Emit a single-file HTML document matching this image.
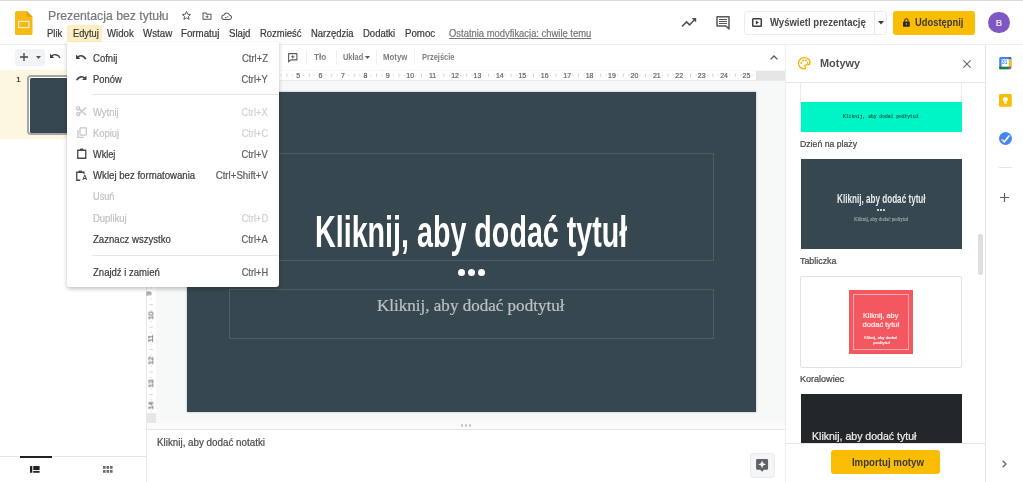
<!DOCTYPE html>
<html lang="pl">
<head>
<meta charset="utf-8">
<title>Prezentacja bez tytułu</title>
<style>
*{box-sizing:border-box;margin:0;padding:0}
html,body{width:1023px;height:482px;overflow:hidden;background:#fff}
body{font-family:"Liberation Sans",sans-serif;color:#333;position:relative;font-size:10px}
.a{position:absolute}
.t{position:absolute;white-space:nowrap}
svg{position:absolute;overflow:visible}
.t,svg{filter:blur(.35px)}
.t{-webkit-text-stroke:.22px}
</style>
</head>
<body>
<div class="a" style="left:0.00px;top:0.00px;width:1023.00px;height:1.00px;background:#dadada;"></div>
<svg style="left:15px;top:10.5px" width="17.5" height="24" viewBox="0 0 17.5 24">
  <path d="M1.6 0 H11.8 L17.5 5.7 V22.4 Q17.5 24 15.9 24 H1.6 Q0 24 0 22.4 V1.6 Q0 0 1.6 0Z" fill="#f5ba15"/>
  <path d="M11.8 0 L17.5 5.7 H13.2 Q11.8 5.7 11.8 4.3Z" fill="#e2a50a"/>
  <rect x="3.6" y="10.4" width="10.3" height="6.2" fill="none" stroke="#fdf0c8" stroke-width="1.2"/>
</svg>
<div class="t" style="font-family:'Liberation Sans',sans-serif;font-size:12.60px;line-height:12.60px;color:#767a7f;top:10.14px;left:47.60px;transform-origin:0 50%;transform:scaleX(0.9740);">Prezentacja bez tytułu</div>
<svg style="left:181px;top:10.300px" width="11" height="11" viewBox="0 0 24 24"><path d="M12 3.2l2.600 6 6.500.6-4.900 4.300 1.500 6.400L12 17.100 6.300 20.500l1.500-6.400L2.900 9.800l6.500-.6z" fill="none" stroke="#54585c" stroke-width="2.100" stroke-linejoin="round"/></svg>
<svg style="left:201.800px;top:12.200px" width="10" height="8" viewBox="0 0 26 22"><path d="M2 3h8l2.500 3H24v14H2z" fill="none" stroke="#54585c" stroke-width="2.800" stroke-linejoin="round"/><path d="M9 13h7m-3-3.200l3.200 3.200-3.200 3.200" fill="none" stroke="#54585c" stroke-width="2.600"/></svg>
<svg style="left:221.300px;top:12.200px" width="11.500" height="8.200" viewBox="0 0 30 22"><path d="M8 20a6 6 0 0 1-.6-12A8 8 0 0 1 22.600 8.500 5.800 5.800 0 0 1 23 20z" fill="none" stroke="#54585c" stroke-width="2.800" stroke-linejoin="round"/><path d="M10.500 13.500l3 3 5.500-5.500" fill="none" stroke="#54585c" stroke-width="2.600"/></svg>
<div class="a" style="left:67.40px;top:25.00px;width:34.80px;height:16.50px;background:#feefc3;border-radius:2px 2px 0 0;"></div>
<div class="t" style="font-family:'Liberation Sans',sans-serif;font-size:10.20px;line-height:10.20px;color:#383b3e;top:28.82px;left:47.10px;transform-origin:0 50%;transform:scaleX(0.9317);">Plik</div>
<div class="t" style="font-family:'Liberation Sans',sans-serif;font-size:10.20px;line-height:10.20px;color:#383b3e;top:28.82px;left:72.50px;transform-origin:0 50%;transform:scaleX(0.9072);">Edytuj</div>
<div class="t" style="font-family:'Liberation Sans',sans-serif;font-size:10.20px;line-height:10.20px;color:#383b3e;top:28.82px;left:107.30px;transform-origin:0 50%;transform:scaleX(0.9430);">Widok</div>
<div class="t" style="font-family:'Liberation Sans',sans-serif;font-size:10.20px;line-height:10.20px;color:#383b3e;top:28.82px;left:142.90px;transform-origin:0 50%;transform:scaleX(0.9554);">Wstaw</div>
<div class="t" style="font-family:'Liberation Sans',sans-serif;font-size:10.20px;line-height:10.20px;color:#383b3e;top:28.82px;left:181.30px;transform-origin:0 50%;transform:scaleX(0.9551);">Formatuj</div>
<div class="t" style="font-family:'Liberation Sans',sans-serif;font-size:10.20px;line-height:10.20px;color:#383b3e;top:28.82px;left:228.80px;transform-origin:0 50%;transform:scaleX(0.9446);">Slajd</div>
<div class="t" style="font-family:'Liberation Sans',sans-serif;font-size:10.20px;line-height:10.20px;color:#383b3e;top:28.82px;left:259.50px;transform-origin:0 50%;transform:scaleX(0.9277);">Rozmieść</div>
<div class="t" style="font-family:'Liberation Sans',sans-serif;font-size:10.20px;line-height:10.20px;color:#383b3e;top:28.82px;left:310.60px;transform-origin:0 50%;transform:scaleX(0.9264);">Narzędzia</div>
<div class="t" style="font-family:'Liberation Sans',sans-serif;font-size:10.20px;line-height:10.20px;color:#383b3e;top:28.82px;left:362.90px;transform-origin:0 50%;transform:scaleX(0.9321);">Dodatki</div>
<div class="t" style="font-family:'Liberation Sans',sans-serif;font-size:10.20px;line-height:10.20px;color:#383b3e;top:28.82px;left:404.90px;transform-origin:0 50%;transform:scaleX(0.9490);">Pomoc</div>
<div class="t" style="font-family:'Liberation Sans',sans-serif;font-size:10.20px;line-height:10.20px;color:#74787c;top:28.82px;left:448.70px;transform-origin:0 50%;transform:scaleX(0.9239);text-decoration:underline;">Ostatnia modyfikacja: chwilę temu</div>
<svg style="left:681px;top:17px" width="16" height="11" viewBox="0 0 16 11"><path d="M1 9.500l4.600-4.600 3 3 4.600-4.800" fill="none" stroke="#4a4e52" stroke-width="1.500"/><path d="M10.600 1h4.600v4.600z" fill="#4a4e52"/></svg>
<svg style="left:716px;top:15.500px" width="14" height="14" viewBox="0 0 14 14"><path d="M1 .8h12v12.200L10 10H1z" fill="none" stroke="#54585c" stroke-width="1.500" stroke-linejoin="round"/><path d="M3 3.500h8M3 5.500h8M3 7.500h8" stroke="#54585c" stroke-width="1"/></svg>
<div class="a" style="left:743.50px;top:10.50px;width:143.00px;height:24.00px;background:#fff;border:1px solid #ebecee;border-radius:3px;"></div>
<div class="a" style="left:874.00px;top:11.00px;width:1.00px;height:23.00px;background:#e8e9eb;"></div>
<svg style="left:751.500px;top:18px" width="10" height="9" viewBox="0 0 10 9"><rect x=".7" y=".7" width="8.600" height="7.600" rx=".8" fill="none" stroke="#3a3d41" stroke-width="1.500"/><path d="M3.900 2.600l3 1.900-3 1.900z" fill="#33363a"/></svg>
<div class="t" style="font-family:'Liberation Sans',sans-serif;font-size:10.20px;line-height:10.20px;color:#44474b;top:18.02px;font-weight:bold;-webkit-text-stroke:0;left:770.00px;transform-origin:0 50%;transform:scaleX(0.9365);">Wyświetl prezentację</div>
<svg style="left:877.500px;top:21px" width="6" height="3.500" viewBox="0 0 6 3.500"><path d="M0 0h6L3 3.500z" fill="#3a3d41"/></svg>
<div class="a" style="left:893.00px;top:10.50px;width:82.00px;height:24.00px;background:#fbbc04;border-radius:3px;"></div>
<svg style="left:902.900px;top:17.600px" width="6.800" height="8.800" viewBox="0 0 8 10"><rect x="0" y="4" width="8" height="6" rx=".8" fill="#2a2a2a"/><path d="M2 4.200V2.800a2 2 0 0 1 4 0v1.400" fill="none" stroke="#2a2a2a" stroke-width="1.200"/><circle cx="4" cy="7" r=".9" fill="#fbbc04"/></svg>
<div class="t" style="font-family:'Liberation Sans',sans-serif;font-size:10.20px;line-height:10.20px;color:#3c3a34;top:18.02px;font-weight:bold;-webkit-text-stroke:0;left:914.90px;transform-origin:0 50%;transform:scaleX(0.9194);">Udostępnij</div>
<div class="a" style="left:988.20px;top:11.50px;width:21.50px;height:21.50px;background:#7e57c2;border-radius:50%;"></div>
<div class="t" style="font-family:'Liberation Sans',sans-serif;font-size:9.60px;line-height:9.60px;color:#f1ecfa;top:17.71px;left:995.80px;">B</div>
<div class="a" style="left:0.00px;top:44.00px;width:785.50px;height:1.00px;background:#f0f0f0;"></div>
<div class="a" style="left:15.00px;top:49.00px;width:29.50px;height:16.50px;background:#f1f3f4;border-radius:2px;"></div>
<svg style="left:19.700px;top:53.400px" width="8" height="8" viewBox="0 0 8 8"><path d="M4 0v8M0 4h8" stroke="#43464a" stroke-width="1.300"/></svg>
<svg style="left:36.200px;top:56.200px" width="5" height="3" viewBox="0 0 5 3"><path d="M0 0h5L2.500 3z" fill="#54585c"/></svg>
<svg style="left:49.800px;top:53.400px" width="11" height="7" viewBox="0 0 22 14"><path d="M2 7.500 C7 1.500 16 2 20 10" fill="none" stroke="#3c4043" stroke-width="2.600"/><path d="M0 1.500v8.500h8.500z" fill="#3c4043"/></svg>
<svg style="left:287.800px;top:52.800px" width="9.500" height="9.500" viewBox="0 0 11 11"><path d="M.7.700h9.600v7.300H3.200L.7 10.300z" fill="none" stroke="#5a5e62" stroke-width="1.300" stroke-linejoin="round"/><path d="M5.500 2.500v3.800M3.600 4.400h3.800" stroke="#5a5e62" stroke-width="1.200"/></svg>
<div class="a" style="left:305.50px;top:49.50px;width:1.00px;height:15.00px;background:#f0f0f0;"></div>
<div class="a" style="left:335.50px;top:49.50px;width:1.00px;height:15.00px;background:#f0f0f0;"></div>
<div class="a" style="left:376.20px;top:49.50px;width:1.00px;height:15.00px;background:#f0f0f0;"></div>
<div class="a" style="left:414.30px;top:49.50px;width:1.00px;height:15.00px;background:#f0f0f0;"></div>
<div class="t" style="font-family:'Liberation Sans',sans-serif;font-size:8.80px;line-height:8.80px;color:#7b7f84;top:52.90px;font-weight:bold;-webkit-text-stroke:0;left:313.80px;transform-origin:0 50%;transform:scaleX(0.9240);">Tło</div>
<div class="t" style="font-family:'Liberation Sans',sans-serif;font-size:8.80px;line-height:8.80px;color:#7b7f84;top:52.90px;font-weight:bold;-webkit-text-stroke:0;left:343.00px;transform-origin:0 50%;transform:scaleX(0.8428);">Układ</div>
<svg style="left:364.800px;top:56.200px" width="5" height="3" viewBox="0 0 5 3"><path d="M0 0h5L2.500 3z" fill="#54585c"/></svg>
<div class="t" style="font-family:'Liberation Sans',sans-serif;font-size:8.80px;line-height:8.80px;color:#7b7f84;top:52.90px;font-weight:bold;-webkit-text-stroke:0;left:383.00px;transform-origin:0 50%;transform:scaleX(0.8913);">Motyw</div>
<div class="t" style="font-family:'Liberation Sans',sans-serif;font-size:8.80px;line-height:8.80px;color:#7b7f84;top:52.90px;font-weight:bold;-webkit-text-stroke:0;left:421.50px;transform-origin:0 50%;transform:scaleX(0.8518);">Przejście</div>
<svg style="left:769.500px;top:55px" width="8" height="5" viewBox="0 0 8 5"><path d="M.6 4.400L4 1l3.400 3.400" fill="none" stroke="#54585c" stroke-width="1.300"/></svg>
<div class="a" style="left:0.00px;top:70.00px;width:145.50px;height:68.50px;background:#fef7e0;"></div>
<div class="a" style="left:145.50px;top:70.00px;width:1.00px;height:412.00px;background:#e9e9e9;"></div>
<div class="t" style="font-family:'Liberation Sans',sans-serif;font-size:8.00px;line-height:8.00px;color:#2a2c2e;top:76.29px;left:16.20px;">1</div>
<div class="a" style="left:27.00px;top:74.70px;width:113.50px;height:60.70px;background:#fff;border:2px solid #a4a7aa;border-radius:4px;"></div>
<div class="a" style="left:30.00px;top:77.70px;width:107.50px;height:55.00px;background:#37474f;border-radius:1.500px;"></div>
<div class="a" style="left:0.00px;top:455.50px;width:145.50px;height:1.00px;background:#e6e6e6;"></div>
<div class="a" style="left:19.80px;top:456.30px;width:32.00px;height:1.40px;background:#202124;"></div>
<svg style="left:29.800px;top:465.800px" width="9.600" height="6.800" viewBox="0 0 10 7"><rect x="0" y="0" width="2.400" height="7" fill="#202124"/><rect x="3.400" y="0" width="6.600" height="4.200" fill="#202124"/><rect x="3.400" y="5.200" width="6.600" height="1.800" fill="#202124"/></svg>
<svg style="left:102.600px;top:465.800px" width="9.600" height="6.800" viewBox="0 0 9.600 6.800"><g fill="#6a6e72"><rect x="0" y="0" width="2.600" height="2.800"/><rect x="3.500" y="0" width="2.600" height="2.800"/><rect x="7" y="0" width="2.600" height="2.800"/><rect x="0" y="4" width="2.600" height="2.800"/><rect x="3.500" y="4" width="2.600" height="2.800"/><rect x="7" y="4" width="2.600" height="2.800"/></g></svg>
<div class="a" style="left:146.50px;top:70.00px;width:639.00px;height:353.00px;background:#f7f8f8;"></div>
<div class="a" style="left:146.50px;top:70.50px;width:639.00px;height:9.30px;background:#e6e6e6;"></div>
<div class="a" style="left:187.00px;top:70.50px;width:568.50px;height:9.30px;background:#fff;"></div>
<div class="t" style="font-family:'Liberation Sans',sans-serif;font-size:7.00px;line-height:7.00px;color:#63676b;top:71.78px;left:206.47px;">1</div>
<div class="t" style="font-family:'Liberation Sans',sans-serif;font-size:7.00px;line-height:7.00px;color:#63676b;top:71.78px;left:228.89px;">2</div>
<div class="t" style="font-family:'Liberation Sans',sans-serif;font-size:7.00px;line-height:7.00px;color:#63676b;top:71.78px;left:251.31px;">3</div>
<div class="t" style="font-family:'Liberation Sans',sans-serif;font-size:7.00px;line-height:7.00px;color:#63676b;top:71.78px;left:273.73px;">4</div>
<div class="t" style="font-family:'Liberation Sans',sans-serif;font-size:7.00px;line-height:7.00px;color:#63676b;top:71.78px;left:296.15px;">5</div>
<div class="t" style="font-family:'Liberation Sans',sans-serif;font-size:7.00px;line-height:7.00px;color:#63676b;top:71.78px;left:318.57px;">6</div>
<div class="t" style="font-family:'Liberation Sans',sans-serif;font-size:7.00px;line-height:7.00px;color:#63676b;top:71.78px;left:340.99px;">7</div>
<div class="t" style="font-family:'Liberation Sans',sans-serif;font-size:7.00px;line-height:7.00px;color:#63676b;top:71.78px;left:363.41px;">8</div>
<div class="t" style="font-family:'Liberation Sans',sans-serif;font-size:7.00px;line-height:7.00px;color:#63676b;top:71.78px;left:385.83px;">9</div>
<div class="t" style="font-family:'Liberation Sans',sans-serif;font-size:7.00px;line-height:7.00px;color:#63676b;top:71.78px;left:406.30px;">10</div>
<div class="t" style="font-family:'Liberation Sans',sans-serif;font-size:7.00px;line-height:7.00px;color:#63676b;top:71.78px;left:428.98px;">11</div>
<div class="t" style="font-family:'Liberation Sans',sans-serif;font-size:7.00px;line-height:7.00px;color:#63676b;top:71.78px;left:451.14px;">12</div>
<div class="t" style="font-family:'Liberation Sans',sans-serif;font-size:7.00px;line-height:7.00px;color:#63676b;top:71.78px;left:473.56px;">13</div>
<div class="t" style="font-family:'Liberation Sans',sans-serif;font-size:7.00px;line-height:7.00px;color:#63676b;top:71.78px;left:495.98px;">14</div>
<div class="t" style="font-family:'Liberation Sans',sans-serif;font-size:7.00px;line-height:7.00px;color:#63676b;top:71.78px;left:518.40px;">15</div>
<div class="t" style="font-family:'Liberation Sans',sans-serif;font-size:7.00px;line-height:7.00px;color:#63676b;top:71.78px;left:540.82px;">16</div>
<div class="t" style="font-family:'Liberation Sans',sans-serif;font-size:7.00px;line-height:7.00px;color:#63676b;top:71.78px;left:563.24px;">17</div>
<div class="t" style="font-family:'Liberation Sans',sans-serif;font-size:7.00px;line-height:7.00px;color:#63676b;top:71.78px;left:585.66px;">18</div>
<div class="t" style="font-family:'Liberation Sans',sans-serif;font-size:7.00px;line-height:7.00px;color:#63676b;top:71.78px;left:608.08px;">19</div>
<div class="t" style="font-family:'Liberation Sans',sans-serif;font-size:7.00px;line-height:7.00px;color:#63676b;top:71.78px;left:630.50px;">20</div>
<div class="t" style="font-family:'Liberation Sans',sans-serif;font-size:7.00px;line-height:7.00px;color:#63676b;top:71.78px;left:652.92px;">21</div>
<div class="t" style="font-family:'Liberation Sans',sans-serif;font-size:7.00px;line-height:7.00px;color:#63676b;top:71.78px;left:675.34px;">22</div>
<div class="t" style="font-family:'Liberation Sans',sans-serif;font-size:7.00px;line-height:7.00px;color:#63676b;top:71.78px;left:697.76px;">23</div>
<div class="t" style="font-family:'Liberation Sans',sans-serif;font-size:7.00px;line-height:7.00px;color:#63676b;top:71.78px;left:720.18px;">24</div>
<div class="t" style="font-family:'Liberation Sans',sans-serif;font-size:7.00px;line-height:7.00px;color:#63676b;top:71.78px;left:742.60px;">25</div>

<svg style="left:0;top:0" width="1023" height="482" viewBox="0 0 1023 482"><g fill="#c6c9cb"><rect x="191.20" y="74.60" width="0.8" height="1.2"/><rect x="196.81" y="73.60" width="0.8" height="3.2"/><rect x="202.41" y="74.60" width="0.8" height="1.2"/><rect x="213.62" y="74.60" width="0.8" height="1.2"/><rect x="219.23" y="73.60" width="0.8" height="3.2"/><rect x="224.84" y="74.60" width="0.8" height="1.2"/><rect x="236.04" y="74.60" width="0.8" height="1.2"/><rect x="241.65" y="73.60" width="0.8" height="3.2"/><rect x="247.25" y="74.60" width="0.8" height="1.2"/><rect x="258.47" y="74.60" width="0.8" height="1.2"/><rect x="264.07" y="73.60" width="0.8" height="3.2"/><rect x="269.68" y="74.60" width="0.8" height="1.2"/><rect x="280.89" y="74.60" width="0.8" height="1.2"/><rect x="286.49" y="73.60" width="0.8" height="3.2"/><rect x="292.10" y="74.60" width="0.8" height="1.2"/><rect x="303.31" y="74.60" width="0.8" height="1.2"/><rect x="308.91" y="73.60" width="0.8" height="3.2"/><rect x="314.52" y="74.60" width="0.8" height="1.2"/><rect x="325.73" y="74.60" width="0.8" height="1.2"/><rect x="331.33" y="73.60" width="0.8" height="3.2"/><rect x="336.94" y="74.60" width="0.8" height="1.2"/><rect x="348.15" y="74.60" width="0.8" height="1.2"/><rect x="353.75" y="73.60" width="0.8" height="3.2"/><rect x="359.36" y="74.60" width="0.8" height="1.2"/><rect x="370.57" y="74.60" width="0.8" height="1.2"/><rect x="376.17" y="73.60" width="0.8" height="3.2"/><rect x="381.78" y="74.60" width="0.8" height="1.2"/><rect x="392.99" y="74.60" width="0.8" height="1.2"/><rect x="398.59" y="73.60" width="0.8" height="3.2"/><rect x="404.20" y="74.60" width="0.8" height="1.2"/><rect x="415.41" y="74.60" width="0.8" height="1.2"/><rect x="421.01" y="73.60" width="0.8" height="3.2"/><rect x="426.62" y="74.60" width="0.8" height="1.2"/><rect x="437.83" y="74.60" width="0.8" height="1.2"/><rect x="443.43" y="73.60" width="0.8" height="3.2"/><rect x="449.04" y="74.60" width="0.8" height="1.2"/><rect x="460.25" y="74.60" width="0.8" height="1.2"/><rect x="465.85" y="73.60" width="0.8" height="3.2"/><rect x="471.46" y="74.60" width="0.8" height="1.2"/><rect x="482.67" y="74.60" width="0.8" height="1.2"/><rect x="488.27" y="73.60" width="0.8" height="3.2"/><rect x="493.88" y="74.60" width="0.8" height="1.2"/><rect x="505.09" y="74.60" width="0.8" height="1.2"/><rect x="510.69" y="73.60" width="0.8" height="3.2"/><rect x="516.30" y="74.60" width="0.8" height="1.2"/><rect x="527.50" y="74.60" width="0.8" height="1.2"/><rect x="533.11" y="73.60" width="0.8" height="3.2"/><rect x="538.72" y="74.60" width="0.8" height="1.2"/><rect x="549.93" y="74.60" width="0.8" height="1.2"/><rect x="555.53" y="73.60" width="0.8" height="3.2"/><rect x="561.14" y="74.60" width="0.8" height="1.2"/><rect x="572.35" y="74.60" width="0.8" height="1.2"/><rect x="577.95" y="73.60" width="0.8" height="3.2"/><rect x="583.56" y="74.60" width="0.8" height="1.2"/><rect x="594.77" y="74.60" width="0.8" height="1.2"/><rect x="600.37" y="73.60" width="0.8" height="3.2"/><rect x="605.98" y="74.60" width="0.8" height="1.2"/><rect x="617.19" y="74.60" width="0.8" height="1.2"/><rect x="622.79" y="73.60" width="0.8" height="3.2"/><rect x="628.40" y="74.60" width="0.8" height="1.2"/><rect x="639.61" y="74.60" width="0.8" height="1.2"/><rect x="645.21" y="73.60" width="0.8" height="3.2"/><rect x="650.82" y="74.60" width="0.8" height="1.2"/><rect x="662.03" y="74.60" width="0.8" height="1.2"/><rect x="667.63" y="73.60" width="0.8" height="3.2"/><rect x="673.24" y="74.60" width="0.8" height="1.2"/><rect x="684.45" y="74.60" width="0.8" height="1.2"/><rect x="690.05" y="73.60" width="0.8" height="3.2"/><rect x="695.66" y="74.60" width="0.8" height="1.2"/><rect x="706.87" y="74.60" width="0.8" height="1.2"/><rect x="712.47" y="73.60" width="0.8" height="3.2"/><rect x="718.08" y="74.60" width="0.8" height="1.2"/><rect x="729.29" y="74.60" width="0.8" height="1.2"/><rect x="734.89" y="73.60" width="0.8" height="3.2"/><rect x="740.50" y="74.60" width="0.8" height="1.2"/><rect x="751.71" y="74.60" width="0.8" height="1.2"/></g></svg>
<div class="a" style="left:146.50px;top:79.50px;width:639.00px;height:1.00px;background:#eaeaea;"></div>
<div class="a" style="left:146.50px;top:79.80px;width:9.30px;height:343.20px;background:#e6e6e6;"></div>
<div class="a" style="left:146.50px;top:92.00px;width:9.30px;height:321.00px;background:#fff;"></div>
<div class="t" style="font-family:'Liberation Sans',sans-serif;font-size:7.20px;line-height:7.20px;color:#63676b;top:110.60px;left:146.70px;transform:rotate(-90deg);">1</div>
<div class="t" style="font-family:'Liberation Sans',sans-serif;font-size:7.20px;line-height:7.20px;color:#63676b;top:133.02px;left:146.70px;transform:rotate(-90deg);">2</div>
<div class="t" style="font-family:'Liberation Sans',sans-serif;font-size:7.20px;line-height:7.20px;color:#63676b;top:155.44px;left:146.70px;transform:rotate(-90deg);">3</div>
<div class="t" style="font-family:'Liberation Sans',sans-serif;font-size:7.20px;line-height:7.20px;color:#63676b;top:177.86px;left:146.70px;transform:rotate(-90deg);">4</div>
<div class="t" style="font-family:'Liberation Sans',sans-serif;font-size:7.20px;line-height:7.20px;color:#63676b;top:200.28px;left:146.70px;transform:rotate(-90deg);">5</div>
<div class="t" style="font-family:'Liberation Sans',sans-serif;font-size:7.20px;line-height:7.20px;color:#63676b;top:222.70px;left:146.70px;transform:rotate(-90deg);">6</div>
<div class="t" style="font-family:'Liberation Sans',sans-serif;font-size:7.20px;line-height:7.20px;color:#63676b;top:245.12px;left:146.70px;transform:rotate(-90deg);">7</div>
<div class="t" style="font-family:'Liberation Sans',sans-serif;font-size:7.20px;line-height:7.20px;color:#63676b;top:267.54px;left:146.70px;transform:rotate(-90deg);">8</div>
<div class="t" style="font-family:'Liberation Sans',sans-serif;font-size:7.20px;line-height:7.20px;color:#63676b;top:289.96px;left:146.70px;transform:rotate(-90deg);">9</div>
<div class="t" style="font-family:'Liberation Sans',sans-serif;font-size:7.20px;line-height:7.20px;color:#63676b;top:312.38px;left:146.70px;transform:rotate(-90deg);">10</div>
<div class="t" style="font-family:'Liberation Sans',sans-serif;font-size:7.20px;line-height:7.20px;color:#63676b;top:334.80px;left:146.70px;transform:rotate(-90deg);">11</div>
<div class="t" style="font-family:'Liberation Sans',sans-serif;font-size:7.20px;line-height:7.20px;color:#63676b;top:357.22px;left:146.70px;transform:rotate(-90deg);">12</div>
<div class="t" style="font-family:'Liberation Sans',sans-serif;font-size:7.20px;line-height:7.20px;color:#63676b;top:379.64px;left:146.70px;transform:rotate(-90deg);">13</div>
<div class="t" style="font-family:'Liberation Sans',sans-serif;font-size:7.20px;line-height:7.20px;color:#63676b;top:402.06px;left:146.70px;transform:rotate(-90deg);">14</div>

<svg style="left:0;top:0" width="1023" height="482" viewBox="0 0 1023 482"><g fill="#c6c9cb"><rect x="150.60" y="96.91" width="1.2" height="0.8"/><rect x="149.60" y="102.51" width="3.2" height="0.8"/><rect x="150.60" y="108.11" width="1.2" height="0.8"/><rect x="150.60" y="119.33" width="1.2" height="0.8"/><rect x="149.60" y="124.93" width="3.2" height="0.8"/><rect x="150.60" y="130.53" width="1.2" height="0.8"/><rect x="150.60" y="141.75" width="1.2" height="0.8"/><rect x="149.60" y="147.35" width="3.2" height="0.8"/><rect x="150.60" y="152.96" width="1.2" height="0.8"/><rect x="150.60" y="164.16" width="1.2" height="0.8"/><rect x="149.60" y="169.77" width="3.2" height="0.8"/><rect x="150.60" y="175.38" width="1.2" height="0.8"/><rect x="150.60" y="186.58" width="1.2" height="0.8"/><rect x="149.60" y="192.19" width="3.2" height="0.8"/><rect x="150.60" y="197.79" width="1.2" height="0.8"/><rect x="150.60" y="209.00" width="1.2" height="0.8"/><rect x="149.60" y="214.61" width="3.2" height="0.8"/><rect x="150.60" y="220.22" width="1.2" height="0.8"/><rect x="150.60" y="231.43" width="1.2" height="0.8"/><rect x="149.60" y="237.03" width="3.2" height="0.8"/><rect x="150.60" y="242.64" width="1.2" height="0.8"/><rect x="150.60" y="253.84" width="1.2" height="0.8"/><rect x="149.60" y="259.45" width="3.2" height="0.8"/><rect x="150.60" y="265.06" width="1.2" height="0.8"/><rect x="150.60" y="276.27" width="1.2" height="0.8"/><rect x="149.60" y="281.87" width="3.2" height="0.8"/><rect x="150.60" y="287.48" width="1.2" height="0.8"/><rect x="150.60" y="298.69" width="1.2" height="0.8"/><rect x="149.60" y="304.29" width="3.2" height="0.8"/><rect x="150.60" y="309.90" width="1.2" height="0.8"/><rect x="150.60" y="321.11" width="1.2" height="0.8"/><rect x="149.60" y="326.71" width="3.2" height="0.8"/><rect x="150.60" y="332.32" width="1.2" height="0.8"/><rect x="150.60" y="343.53" width="1.2" height="0.8"/><rect x="149.60" y="349.13" width="3.2" height="0.8"/><rect x="150.60" y="354.74" width="1.2" height="0.8"/><rect x="150.60" y="365.95" width="1.2" height="0.8"/><rect x="149.60" y="371.55" width="3.2" height="0.8"/><rect x="150.60" y="377.16" width="1.2" height="0.8"/><rect x="150.60" y="388.37" width="1.2" height="0.8"/><rect x="149.60" y="393.97" width="3.2" height="0.8"/><rect x="150.60" y="399.58" width="1.2" height="0.8"/><rect x="150.60" y="410.79" width="1.2" height="0.8"/></g></svg>
<div class="a" style="left:187.00px;top:92.00px;width:568.50px;height:320.00px;background:#37474f;box-shadow:0 0 2px rgba(0,0,0,.3);"></div>
<div class="a" style="left:229.00px;top:153.30px;width:485.00px;height:107.70px;border:1px solid #4f5e64;"></div>
<div class="a" style="left:229.00px;top:288.80px;width:485.00px;height:50.00px;border:1px solid #4f5e64;"></div>
<div class="a" id="ttl" style="left:315px;top:205.500px;width:312.500px;height:50px;overflow:visible"><div class="a" style="left:0;top:0;white-space:nowrap;font-weight:bold;font-size:44.800px;line-height:50px;color:#fff;transform-origin:0 0;transform:scaleX(0.6401)">Kliknij, aby dodać tytuł</div></div>
<div class="a" style="left:457.50px;top:268.90px;width:7.00px;height:7.00px;background:#fff;border-radius:50%;"></div>
<div class="a" style="left:467.50px;top:268.90px;width:7.00px;height:7.00px;background:#fff;border-radius:50%;"></div>
<div class="a" style="left:477.50px;top:268.90px;width:7.00px;height:7.00px;background:#fff;border-radius:50%;"></div>
<div class="t" style="font-family:'Liberation Serif',serif;font-size:17.40px;line-height:17.40px;color:#bac1c4;top:296.69px;left:377.20px;transform-origin:0 50%;transform:scaleX(0.9797);">Kliknij, aby dodać podtytuł</div>
<div class="a" style="left:146.50px;top:422.80px;width:639.00px;height:6.20px;background:#fbfbfb;"></div>
<div class="a" style="left:146.50px;top:429.00px;width:639.00px;height:1.00px;background:#e4e4e4;"></div>
<div class="a" style="left:146.50px;top:430.00px;width:639.00px;height:52.00px;background:#fff;"></div>
<div class="a" style="left:460.50px;top:424.40px;width:2.20px;height:2.20px;background:#c3c6c9;border-radius:50%;"></div>
<div class="a" style="left:464.70px;top:424.40px;width:2.20px;height:2.20px;background:#c3c6c9;border-radius:50%;"></div>
<div class="a" style="left:468.90px;top:424.40px;width:2.20px;height:2.20px;background:#c3c6c9;border-radius:50%;"></div>
<div class="t" style="font-family:'Liberation Sans',sans-serif;font-size:10.20px;line-height:10.20px;color:#4a4d51;top:437.62px;left:156.80px;transform-origin:0 50%;transform:scaleX(0.9631);">Kliknij, aby dodać notatki</div>
<div class="a" style="left:749.50px;top:453.30px;width:25.80px;height:24.90px;background:#f4f5f5;border:1px solid #e9eaeb;border-radius:3px;"></div>
<svg style="left:756.200px;top:458.800px" width="12.200" height="13" viewBox="0 0 12 13"><path d="M1.200 0h9.600Q12 0 12 1.200v8.300q0 1.200-1.200 1.200H7.800L6 12.800 4.200 10.700H1.200Q0 10.700 0 9.500V1.200Q0 0 1.200 0z" fill="#5e6165"/><path d="M6 1.500l1.150 2.750 2.750 1.150-2.750 1.150L6 9.300 4.850 6.550 2.100 5.400l2.750-1.150z" fill="#f6f6f6"/></svg>
<div class="a" style="left:785.00px;top:44.00px;width:201.00px;height:438.00px;background:#fff;border-left:1px solid #efefef;"></div>
<div class="a" style="left:800.00px;top:82.00px;width:162.00px;height:50.00px;background:#fff;border:1px solid #ececec;border-top:none;"></div>
<div class="a" style="left:801.00px;top:102.30px;width:160.50px;height:29.30px;background:#00f5c6;"></div>
<div class="t" style="font-family:'Liberation Mono',monospace;font-size:4.60px;line-height:4.60px;color:#0a5a4e;top:114.89px;font-weight:bold;-webkit-text-stroke:0;left:843.30px;transform-origin:0 50%;transform:scaleX(1.0143);">Kliknij, aby dodać podtytuł</div>
<div class="t" style="font-family:'Liberation Sans',sans-serif;font-size:9.40px;line-height:9.40px;color:#44474a;top:138.71px;left:800.00px;transform-origin:0 50%;transform:scaleX(0.9268);">Dzień na plaży</div>
<div class="a" style="left:801.00px;top:158.80px;width:160.50px;height:90.40px;background:#37474f;"></div>
<div class="a" style="left:836.800px;top:190px;width:89px;height:18px"><div class="a" id="ttl2" style="left:0;top:0;white-space:nowrap;font-weight:bold;font-size:12.300px;line-height:18px;color:#e8ecee;transform-origin:0 0;transform:scaleX(0.6616)">Kliknij, aby dodać tytuł</div></div>
<div class="a" style="left:877.30px;top:209.00px;width:2.00px;height:2.00px;background:#fff;border-radius:50%;"></div>
<div class="a" style="left:880.00px;top:209.00px;width:2.00px;height:2.00px;background:#fff;border-radius:50%;"></div>
<div class="a" style="left:882.70px;top:209.00px;width:2.00px;height:2.00px;background:#fff;border-radius:50%;"></div>
<div class="t" style="font-family:'Liberation Serif',serif;font-size:5.20px;line-height:5.20px;color:#929ca1;top:216.87px;left:854.00px;transform-origin:0 50%;transform:scaleX(0.9463);">Kliknij, aby dodać podtytuł</div>
<div class="t" style="font-family:'Liberation Sans',sans-serif;font-size:9.40px;line-height:9.40px;color:#44474a;top:256.21px;left:800.00px;transform-origin:0 50%;transform:scaleX(0.9465);">Tabliczka</div>
<div class="a" style="left:978.30px;top:233.50px;width:5.00px;height:41.50px;background:#dcdee0;border-radius:2.500px;"></div>
<div class="a" style="left:800.00px;top:275.70px;width:162.00px;height:92.00px;background:#fff;border:1px solid #e2e3e5;border-radius:2px;"></div>
<div class="a" style="left:849.20px;top:290.00px;width:63.80px;height:63.60px;background:#f3575f;"></div>
<div class="a" style="left:852.70px;top:293.50px;width:56.80px;height:56.60px;border:1px solid rgba(255,255,255,.5);"></div>
<div class="t" style="font-family:'Liberation Sans',sans-serif;font-size:7.80px;line-height:7.80px;color:#fdeaeb;top:311.99px;left:862.46px;transform-origin:50% 50%;transform:scaleX(0.9522);">Kliknij, aby</div>
<div class="t" style="font-family:'Liberation Sans',sans-serif;font-size:7.80px;line-height:7.80px;color:#fdeaeb;top:320.79px;left:862.24px;transform-origin:50% 50%;transform:scaleX(0.9677);">dodać tytuł</div>
<div class="t" style="font-family:'Liberation Sans',sans-serif;font-size:4.30px;line-height:4.30px;color:#fde3e4;top:336.10px;left:864.37px;transform-origin:50% 50%;transform:scaleX(0.9865);">Kliknij, aby dodać</div>
<div class="t" style="font-family:'Liberation Sans',sans-serif;font-size:4.30px;line-height:4.30px;color:#fde3e4;top:341.10px;left:873.57px;transform-origin:50% 50%;transform:scaleX(1.0888);">podtytuł</div>
<div class="t" style="font-family:'Liberation Sans',sans-serif;font-size:9.40px;line-height:9.40px;color:#44474a;top:373.61px;left:800.00px;transform-origin:0 50%;transform:scaleX(0.9638);">Koralowiec</div>
<div class="a" style="left:801.00px;top:393.60px;width:160.50px;height:50.00px;background:#22282a;"></div>
<div class="t" style="font-family:'Liberation Sans',sans-serif;font-size:10.80px;line-height:10.80px;color:#eef0f1;top:431.02px;left:811.60px;transform-origin:0 50%;transform:scaleX(0.9773);">Kliknij, aby dodać tytuł</div>
<div class="a" style="left:786.00px;top:442.50px;width:200.00px;height:39.50px;background:#fff;border-top:1px solid #e6e6e6;"></div>
<div class="a" style="left:831.30px;top:450.00px;width:108.80px;height:23.60px;background:#fbbc04;border-radius:3px;"></div>
<div class="t" style="font-family:'Liberation Sans',sans-serif;font-size:10.20px;line-height:10.20px;color:#3a3a3a;top:457.82px;font-weight:bold;-webkit-text-stroke:0;left:849.68px;transform-origin:50% 50%;transform:scaleX(0.9493);">Importuj motyw</div>
<div class="a" style="left:786.00px;top:45.00px;width:200.00px;height:37.50px;background:#fff;border-bottom:1px solid #e6e6e6;"></div>
<svg style="left:797.200px;top:55.800px" width="14.500" height="14.500" viewBox="0 0 24 24"><path d="M12 2.500C6.700 2.500 2.500 6.700 2.500 12s4.200 9.500 9.500 9.500c1.300 0 2.100-1 2.100-2.100 0-.6-.2-1-.5-1.400-.3-.4-.5-.8-.5-1.300 0-1.200.9-2.100 2.100-2.100h2.300c2.200 0 4-1.800 4-4 0-4.500-4.200-8.100-9.500-8.100z" fill="none" stroke="#f9ab00" stroke-width="2.100"/><circle cx="7" cy="11.500" r="1.500" fill="#f9ab00"/><circle cx="10" cy="7.300" r="1.500" fill="#f9ab00"/><circle cx="14.500" cy="7.300" r="1.500" fill="#f9ab00"/><circle cx="17.500" cy="11.200" r="1.500" fill="#f9ab00"/></svg>
<div class="t" style="font-family:'Liberation Sans',sans-serif;font-size:11.80px;line-height:11.80px;color:#4c4f53;top:58.34px;font-weight:bold;-webkit-text-stroke:0;left:820.20px;transform-origin:0 50%;transform:scaleX(0.9245);">Motywy</div>
<svg style="left:963.200px;top:59.700px" width="8" height="8" viewBox="0 0 8 8"><path d="M.4.400l7.200 7.200M7.600.400L.4 7.600" stroke="#5f6368" stroke-width="1.100"/></svg>
<div class="a" style="left:985.00px;top:44.00px;width:38.00px;height:438.00px;background:#fff;border-left:1px solid #e6e6e6;"></div>
<svg style="left:998.600px;top:57px" width="12.600" height="12.200" viewBox="0 0 13 13"><rect x="0" y="0" width="13" height="13" rx="1.600" fill="#4285f4"/><rect x="10.300" y="2.200" width="2.700" height="8.100" fill="#fbbc04"/><rect x="0" y="10.300" width="10.300" height="2.700" fill="#188038"/><path d="M10.300 10.300h2.700l-2.700 2.700z" fill="#ea4335"/><path d="M10.300 0h1.100q1.600 0 1.600 1.600v.6h-2.700z" fill="#1967d2"/><rect x="2.600" y="2.400" width="7.700" height="7.900" fill="#fff"/></svg>
<div class="t" style="font-family:'Liberation Sans',sans-serif;font-size:4.80px;line-height:4.80px;color:#4285f4;top:61.26px;font-weight:bold;-webkit-text-stroke:0;left:1002.03px;">31</div>
<svg style="left:998.900px;top:94px" width="12.800" height="12.800" viewBox="0 0 12.800 12.800"><rect x="0" y="0" width="12.800" height="12.800" rx="1.500" fill="#fbbc04"/><circle cx="6.400" cy="5.400" r="2.500" fill="#fff"/><rect x="5.200" y="7.600" width="2.400" height="2.200" fill="#fff"/></svg>
<svg style="left:998.500px;top:131.500px" width="13" height="13" viewBox="0 0 13 13"><circle cx="6.500" cy="6.500" r="6.500" fill="#4285f4"/><path d="M3.200 7.800l2.200 2 4.600-5.800" fill="none" stroke="#fff" stroke-width="1.700" stroke-linecap="round"/><circle cx="3.600" cy="8" r="1" fill="#fbbc04"/></svg>
<div class="a" style="left:998.50px;top:167.00px;width:13.50px;height:1.00px;background:#e4e5e7;"></div>
<svg style="left:1000.400px;top:192.500px" width="9" height="9" viewBox="0 0 9 9"><path d="M4.500 0v9M0 4.500h9" stroke="#5f6368" stroke-width="1.200"/></svg>
<svg style="left:1002.300px;top:460.300px" width="5" height="8" viewBox="0 0 5 8"><path d="M.700.700L4 4 .7 7.300" fill="none" stroke="#5f6368" stroke-width="1.300"/></svg>
<div class="a" style="left:0.00px;top:44.00px;width:1023.00px;height:1.00px;background:#efefef;"></div>
<div class="a" style="left:67.40px;top:41.50px;width:211.80px;height:245.70px;background:#fff;border-radius:0 0 3px 3px;box-shadow:0 1.500px 4px rgba(0,0,0,.24);clip-path:inset(0 -8px -8px -8px);"></div>
<div class="t" style="font-family:'Liberation Sans',sans-serif;font-size:10.20px;line-height:10.20px;color:#3a3d40;top:53.62px;left:93.30px;transform-origin:0 50%;transform:scaleX(0.9368);">Cofnij</div>
<div class="t" style="font-family:'Liberation Sans',sans-serif;font-size:10.20px;line-height:10.20px;color:#5c5f63;top:53.62px;left:239.98px;transform-origin:100% 50%;transform:scaleX(0.9281);">Ctrl+Z</div>
<div class="t" style="font-family:'Liberation Sans',sans-serif;font-size:10.20px;line-height:10.20px;color:#3a3d40;top:74.62px;left:93.30px;transform-origin:0 50%;transform:scaleX(0.9212);">Ponów</div>
<div class="t" style="font-family:'Liberation Sans',sans-serif;font-size:10.20px;line-height:10.20px;color:#5c5f63;top:74.62px;left:239.41px;transform-origin:100% 50%;transform:scaleX(0.9093);">Ctrl+Y</div>
<div class="t" style="font-family:'Liberation Sans',sans-serif;font-size:10.20px;line-height:10.20px;color:#c0c2c4;top:107.52px;left:93.30px;transform-origin:0 50%;transform:scaleX(0.9293);">Wytnij</div>
<div class="t" style="font-family:'Liberation Sans',sans-serif;font-size:10.20px;line-height:10.20px;color:#cfd1d3;top:107.52px;left:239.41px;transform-origin:100% 50%;transform:scaleX(0.9093);">Ctrl+X</div>
<div class="t" style="font-family:'Liberation Sans',sans-serif;font-size:10.20px;line-height:10.20px;color:#c0c2c4;top:128.72px;left:93.30px;transform-origin:0 50%;transform:scaleX(0.9249);">Kopiuj</div>
<div class="t" style="font-family:'Liberation Sans',sans-serif;font-size:10.20px;line-height:10.20px;color:#cfd1d3;top:128.72px;left:238.84px;transform-origin:100% 50%;transform:scaleX(0.9089);">Ctrl+C</div>
<div class="t" style="font-family:'Liberation Sans',sans-serif;font-size:10.20px;line-height:10.20px;color:#3a3d40;top:149.82px;left:93.30px;transform-origin:0 50%;transform:scaleX(0.8994);">Wklej</div>
<div class="t" style="font-family:'Liberation Sans',sans-serif;font-size:10.20px;line-height:10.20px;color:#5c5f63;top:149.82px;left:239.41px;transform-origin:100% 50%;transform:scaleX(0.9093);">Ctrl+V</div>
<div class="t" style="font-family:'Liberation Sans',sans-serif;font-size:10.20px;line-height:10.20px;color:#3a3d40;top:171.22px;left:93.30px;transform-origin:0 50%;transform:scaleX(0.9449);">Wklej bez formatowania</div>
<div class="t" style="font-family:'Liberation Sans',sans-serif;font-size:10.20px;line-height:10.20px;color:#5c5f63;top:171.22px;left:213.06px;transform-origin:100% 50%;transform:scaleX(0.9520);">Ctrl+Shift+V</div>
<div class="t" style="font-family:'Liberation Sans',sans-serif;font-size:10.20px;line-height:10.20px;color:#c0c2c4;top:192.22px;left:93.30px;transform-origin:0 50%;transform:scaleX(0.9035);">Usuń</div>
<div class="t" style="font-family:'Liberation Sans',sans-serif;font-size:10.20px;line-height:10.20px;color:#c0c2c4;top:213.82px;left:93.30px;transform-origin:0 50%;transform:scaleX(0.9297);">Duplikuj</div>
<div class="t" style="font-family:'Liberation Sans',sans-serif;font-size:10.20px;line-height:10.20px;color:#cfd1d3;top:213.82px;left:238.84px;transform-origin:100% 50%;transform:scaleX(0.9089);">Ctrl+D</div>
<div class="t" style="font-family:'Liberation Sans',sans-serif;font-size:10.20px;line-height:10.20px;color:#3a3d40;top:235.42px;left:93.30px;transform-origin:0 50%;transform:scaleX(0.9425);">Zaznacz wszystko</div>
<div class="t" style="font-family:'Liberation Sans',sans-serif;font-size:10.20px;line-height:10.20px;color:#5c5f63;top:235.42px;left:239.41px;transform-origin:100% 50%;transform:scaleX(0.9093);">Ctrl+A</div>
<div class="t" style="font-family:'Liberation Sans',sans-serif;font-size:10.20px;line-height:10.20px;color:#3a3d40;top:267.52px;left:93.30px;transform-origin:0 50%;transform:scaleX(0.9363);">Znajdź i zamień</div>
<div class="t" style="font-family:'Liberation Sans',sans-serif;font-size:10.20px;line-height:10.20px;color:#5c5f63;top:267.52px;left:238.84px;transform-origin:100% 50%;transform:scaleX(0.9089);">Ctrl+H</div>
<div class="a" style="left:92.40px;top:94.00px;width:186.80px;height:1.00px;background:#e6e6e6;"></div>
<div class="a" style="left:92.40px;top:254.80px;width:186.80px;height:1.00px;background:#e6e6e6;"></div>
<svg style="left:76.200px;top:54.100px" width="10.500" height="7" viewBox="0 0 21 14"><path d="M2.500 7.500C7 1.800 15.500 2 19.500 10.500" fill="none" stroke="#45484c" stroke-width="3.200"/><path d="M0 1v9h9z" fill="#45484c"/></svg>
<svg style="left:76.200px;top:75.200px" width="10.500" height="7" viewBox="0 0 21 14"><path d="M18.500 7.500C14 1.800 5.500 2 1.500 10.500" fill="none" stroke="#45484c" stroke-width="3.200"/><path d="M21 1v9h-9z" fill="#45484c"/></svg>
<svg style="left:76.300px;top:106.200px" width="10.500" height="10.500" viewBox="0 0 21 21"><g fill="none" stroke="#c4c6c8" stroke-width="2.700"><circle cx="4.500" cy="4.800" r="3"/><circle cx="4.500" cy="16.200" r="3"/><path d="M7 6.500L20 18M7 14.500L20 3"/></g></svg>
<svg style="left:76.800px;top:127.200px" width="10" height="11" viewBox="0 0 20 22"><g fill="none" stroke="#c4c6c8" stroke-width="2.500"><rect x="6" y="1.500" width="12.500" height="14.500" rx="1"/><path d="M2 6v14.500h11.500"/></g></svg>
<svg style="left:76.600px;top:148.300px" width="9.500" height="11" viewBox="0 0 19 22"><path d="M1.500 4.500h16v16h-16z" fill="none" stroke="#45484c" stroke-width="2.600"/><rect x="6.200" y="1" width="6.600" height="5" rx="1" fill="#45484c"/></svg>
<svg style="left:76.200px;top:169.800px" width="11" height="11" viewBox="0 0 22 22"><path d="M8.500 20.500H1.500V4.500h14.500v4" fill="none" stroke="#45484c" stroke-width="2.600"/><rect x="5.200" y="1" width="6.600" height="5" rx="1" fill="#45484c"/></svg>
<div class="t" style="font-family:'Liberation Sans',sans-serif;font-size:7.00px;line-height:7.00px;color:#45484c;top:173.88px;font-weight:bold;-webkit-text-stroke:0;left:82.27px;">A</div>

</body>
</html>
